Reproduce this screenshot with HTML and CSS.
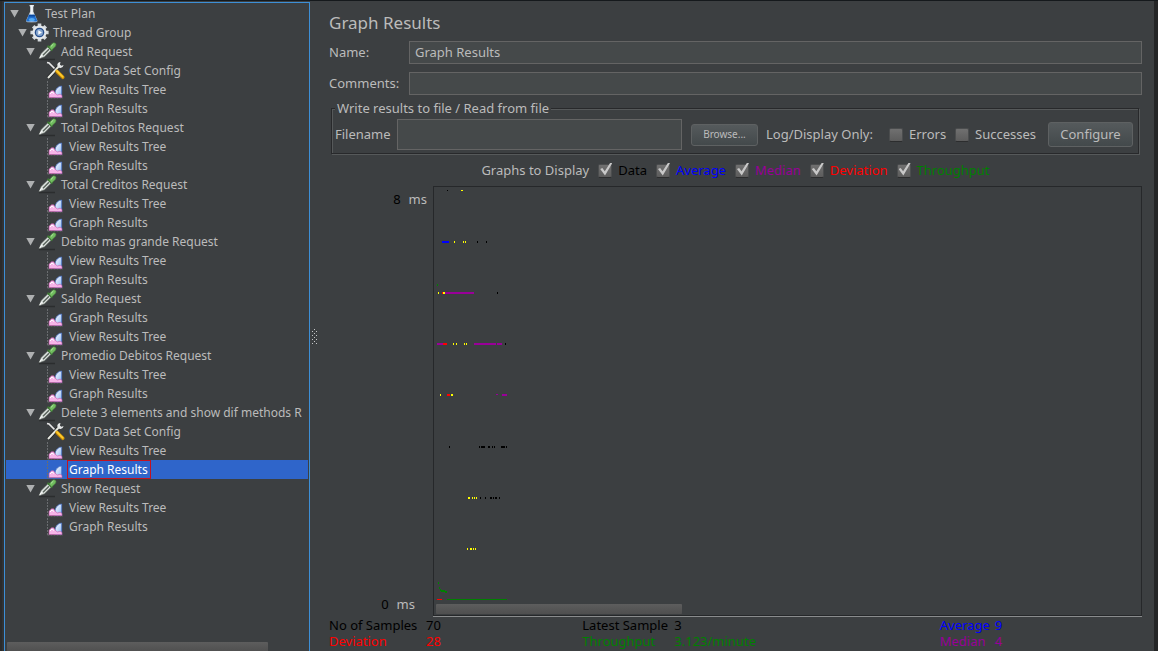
FILE: index.html
```html
<!DOCTYPE html>
<html lang="en">
<head>
<meta charset="utf-8">
<title>Graph Results</title>
<link rel="stylesheet" href="styles.css">
</head>
<body>
<svg class="defs" aria-hidden="true">
  <defs>
    <linearGradient id="glass" x1="0" x2="1"><stop offset="0" stop-color="#8fa3b3"/><stop offset=".5" stop-color="#f4f8fb"/><stop offset="1" stop-color="#8fa3b3"/></linearGradient>
    <linearGradient id="wave" x1="0" y1="0" x2="1" y2="1"><stop offset="0" stop-color="#fff"/><stop offset="1" stop-color="#86b4f4"/></linearGradient>
    <symbol id="flask" viewBox="0 0 20 19">
      <path d="M7.500 1h4.500v1l-.7.800V7.500l4.200 9q.4 1.700-1.500 1.700H5.500q-1.900 0-1.500-1.700l4.200-9V2.800L7.500 2z" fill="url(#glass)"/>
      <path d="M7 10.800h5.600l2.400 5.400q.3 1.400-1.300 1.400H5.800q-1.600 0-1.300-1.400z" fill="#1f6fd0"/>
      <path d="M7 10.800h5.600l.7 1.600h-7z" fill="#0b489c"/><ellipse cx="9.800" cy="15.500" rx="3" ry="1.600" fill="#54aaf2"/>
    </symbol>
    <symbol id="gear" viewBox="0 0 20 19">
      <g stroke="#d5dade" stroke-width="3.600"><path d="M9.500 .4v18.200M.4 9.500h18.200M3.200 3.200l12.600 12.600M15.800 3.200L3.200 15.800"/></g>
      <circle cx="9.500" cy="9.500" r="7" fill="#e5e8ea"/><circle cx="9.500" cy="9.500" r="4.800" fill="#274f8e"/><circle cx="9.500" cy="9.500" r="3.500" fill="#86a6cf"/>
      <path d="M8.300 7.300l3.600 2.200-3.600 2.200z" fill="#fff"/>
    </symbol>
    <symbol id="pipette" viewBox="0 0 20 19">
      <path d="M1 17.500h16" stroke="#2b2d2e" stroke-width="1.500"/>
      <path d="M1 16.800l2.200-5.300 7.300-7.200 3.300 3.300-7.300 7.100z" fill="#dde2df" stroke="#6d746f" stroke-width=".6"/>
      <path d="M5 13.200l6-6" stroke="#59625c" stroke-width="1.400"/><path d="M1.800 15.900l2-3.300" stroke="#fff" stroke-width="1"/>
      <path d="M9.500 3.800l4.800 4.800" stroke="#3d7235" stroke-width="2"/>
      <path d="M11 5l3.300-3.600q1.700-1.400 3.100-.1 1.400 1.500-.1 3.200L13.600 8z" fill="#72bd60" stroke="#4a8a3e" stroke-width=".6"/><path d="M13 4.400l2.400-2.300" stroke="#b9e7a9"/>
    </symbol>
    <symbol id="tools" viewBox="0 0 20 19">
      <path d="M1 1.500l2 .5 8 8" stroke="#e8e8e8" stroke-width="1.700" fill="none"/>
      <path d="M2 17L12.500 5.800" stroke="#202224" stroke-width="3.600"/><path d="M2 17L12.500 5.800" stroke="#e5e7df" stroke-width="2"/>
      <path d="M11 10.500l5.800 5.800" stroke="#c88b00" stroke-width="3.600" stroke-linecap="round"/><path d="M11 10l5.800 5.800" stroke="#ffcb2e" stroke-width="1.800" stroke-linecap="round"/>
      <path d="M14.500 .9q-3.200.4-3.200 3.200.3 2.900 3.300 2.800 2.600-.2 3-2.900l-2.300.7-1.400-1.300z" fill="#e6e8e8"/>
    </symbol>
    <symbol id="chart" viewBox="0 0 20 19">
      <path d="M1.500 1v17M1.500 18H17" stroke="#6a6d70" stroke-dasharray="2 1" fill="none"/>
      <path d="M9.500 17.500q-1.500-6 1.500-9.300 2.300-2.400 4.700-2.200v11.500z" fill="url(#wave)" stroke="#3f68c0" stroke-width=".7"/>
      <path d="M3 17.500v-4.300l2.600-2.400h2l1.900 2.800 2 1.400 2.700-.8 1.800 1.300v2z" fill="#f6b4e8" stroke="#c35ca8" stroke-width=".6"/>
      <path d="M4 14l2-2 2 1.500" stroke="#fff" fill="none"/>
    </symbol>
  </defs>
</svg>
<div class="window">
  <div class="edge edge-left"></div>
  <nav class="tree-panel" aria-label="Test plan tree">
    <ul class="tree">
      <li class="row d0"><span class="arrow"></span><svg class="icon"><use href="#flask"/></svg><span class="label">Test Plan</span></li>
      <li class="row d1"><span class="arrow"></span><svg class="icon"><use href="#gear"/></svg><span class="label">Thread Group</span></li>
      <li class="row d2"><span class="arrow"></span><svg class="icon"><use href="#pipette"/></svg><span class="label">Add Request</span></li>
      <li class="row d3"><svg class="icon"><use href="#tools"/></svg><span class="label">CSV Data Set Config</span></li>
      <li class="row d3"><svg class="icon"><use href="#chart"/></svg><span class="label">View Results Tree</span></li>
      <li class="row d3"><svg class="icon"><use href="#chart"/></svg><span class="label">Graph Results</span></li>
      <li class="row d2"><span class="arrow"></span><svg class="icon"><use href="#pipette"/></svg><span class="label">Total Debitos Request</span></li>
      <li class="row d3"><svg class="icon"><use href="#chart"/></svg><span class="label">View Results Tree</span></li>
      <li class="row d3"><svg class="icon"><use href="#chart"/></svg><span class="label">Graph Results</span></li>
      <li class="row d2"><span class="arrow"></span><svg class="icon"><use href="#pipette"/></svg><span class="label">Total Creditos Request</span></li>
      <li class="row d3"><svg class="icon"><use href="#chart"/></svg><span class="label">View Results Tree</span></li>
      <li class="row d3"><svg class="icon"><use href="#chart"/></svg><span class="label">Graph Results</span></li>
      <li class="row d2"><span class="arrow"></span><svg class="icon"><use href="#pipette"/></svg><span class="label">Debito mas grande Request</span></li>
      <li class="row d3"><svg class="icon"><use href="#chart"/></svg><span class="label">View Results Tree</span></li>
      <li class="row d3"><svg class="icon"><use href="#chart"/></svg><span class="label">Graph Results</span></li>
      <li class="row d2"><span class="arrow"></span><svg class="icon"><use href="#pipette"/></svg><span class="label">Saldo Request</span></li>
      <li class="row d3"><svg class="icon"><use href="#chart"/></svg><span class="label">Graph Results</span></li>
      <li class="row d3"><svg class="icon"><use href="#chart"/></svg><span class="label">View Results Tree</span></li>
      <li class="row d2"><span class="arrow"></span><svg class="icon"><use href="#pipette"/></svg><span class="label">Promedio Debitos Request</span></li>
      <li class="row d3"><svg class="icon"><use href="#chart"/></svg><span class="label">View Results Tree</span></li>
      <li class="row d3"><svg class="icon"><use href="#chart"/></svg><span class="label">Graph Results</span></li>
      <li class="row d2"><span class="arrow"></span><svg class="icon"><use href="#pipette"/></svg><span class="label">Delete 3 elements and show dif methods R</span></li>
      <li class="row d3"><svg class="icon"><use href="#tools"/></svg><span class="label">CSV Data Set Config</span></li>
      <li class="row d3"><svg class="icon"><use href="#chart"/></svg><span class="label">View Results Tree</span></li>
      <li class="row d3 selected"><svg class="icon"><use href="#chart"/></svg><span class="label">Graph Results</span></li>
      <li class="row d2"><span class="arrow"></span><svg class="icon"><use href="#pipette"/></svg><span class="label">Show Request</span></li>
      <li class="row d3"><svg class="icon"><use href="#chart"/></svg><span class="label">View Results Tree</span></li>
      <li class="row d3"><svg class="icon"><use href="#chart"/></svg><span class="label">Graph Results</span></li>
    </ul>
    <div class="scroll-thumb tree-thumb"></div>
  </nav>
  <div class="splitter">
    <svg class="grip" viewBox="0 0 6 16" shape-rendering="crispEdges"><path d="M3 .5h1M1 2.500h1M5 2.500h1M3 4.500h1M1 6.500h1M5 6.500h1M3 8.500h1M1 10.500h1M5 10.500h1M3 12.500h1M1 14.500h1M5 14.500h1" stroke="#c4c6c7"/></svg>
  </div>
  <main class="main">
    <h1 class="title">Graph Results</h1>
    <div class="field"><label for="name">Name:</label><input class="text" id="name" type="text" value="Graph Results"></div>
    <div class="field"><label for="comments">Comments:</label><input class="text" id="comments" type="text"></div>
    <fieldset class="file-box">
      <legend>Write results to file / Read from file</legend>
      <div class="file-row">
        <label for="file">Filename</label>
        <input class="text file-input" id="file" type="text">
        <button class="btn browse" type="button">Browse...</button>
        <span class="log-label">Log/Display Only:</span>
        <label class="check errors"><input type="checkbox">Errors</label>
        <label class="check successes"><input type="checkbox">Successes</label>
        <button class="btn configure" type="button">Configure</button>
      </div>
    </fieldset>
    <div class="series">
      <span>Graphs to Display</span>
      <label class="check c-data"><input type="checkbox" checked>Data</label>
      <label class="check c-average"><input type="checkbox" checked>Average</label>
      <label class="check c-median"><input type="checkbox" checked>Median</label>
      <label class="check c-deviation"><input type="checkbox" checked>Deviation</label>
      <label class="check c-throughput"><input type="checkbox" checked>Throughput</label>
    </div>
    <section class="graph">
      <div class="axis">
        <div class="tick"><span class="c-data">8</span><span>ms</span></div>
        <div class="tick low"><span class="c-data">0</span><span>ms</span></div>
      </div>
      <div class="plot">
        <svg class="points" viewBox="434 187 80 416" fill="none" stroke-width="2" shape-rendering="crispEdges">
          <g stroke="#000"><path stroke-width="1" d="M447 190.500h1"/><path d="M477 242h1M486 242h1M497 293h1M505 344h1M449 447h1M479 447h1M481 447h4M488 447h2M492 447h1M494 447h1M501 447h4M506 447h1M480 498h1M485 498h1M490 498h2M493 498h1M495 498h2M499 498h1"/></g>
          <g stroke="#ff0"><path stroke-width="1" d="M461 190.500h2"/><path d="M454 242h1M463 242h1M465 242h1M438 293h1M443 293h2M453 344h1M456 344h1M464 344h1M466 344h1M440 395h1M451 395h2M468 498h2M472 498h1M474 498h1M476 498h1M467 549h1M470 549h2M473 549h1M475 549h1"/></g>
          <path stroke="#00f" d="M442 242h7"/>
          <g stroke="#909"><path d="M445 293h29M437 344h6M474 344h22M497 344h5M502 395h5"/><path stroke-width="1" d="M496 394.500h2"/></g>
          <g stroke="red"><path d="M442 293h1M443 344h4M447 395h3"/><path stroke-width="1" d="M437 599.500h5"/></g>
          <g stroke="#008000"><path d="M437 285h1M438 583h1M439 588h1M440 590h1M441 591h4M445 592h2"/><path stroke-width="1" d="M447 599.500h60"/></g>
        </svg>
        <div class="scroll-thumb plot-thumb"></div>
      </div>
    </section>
    <dl class="stats">
      <div class="c-data"><dt>No of Samples</dt><dd>70</dd></div>
      <div class="c-data"><dt>Latest Sample</dt><dd>3</dd></div>
      <div class="c-average short"><dt>Average</dt><dd>9</dd></div>
      <div class="c-deviation"><dt>Deviation</dt><dd>28</dd></div>
      <div class="c-throughput"><dt>Throughput</dt><dd>3.123/minute</dd></div>
      <div class="c-median short"><dt>Median</dt><dd>4</dd></div>
    </dl>
  </main>
  <div class="edge edge-right"></div>
</div>
</body>
</html>
```
FILE: styles.css
```css
* { box-sizing: border-box; }

body {
  margin: 0;
  background: #3c3f41;
  color: #bbb;
  font: 13px/19px "Noto Sans", "Open Sans", sans-serif;
  overflow: hidden;
}

.defs { position: absolute; width: 0; height: 0; }

.window {
  display: grid;
  grid-template-columns: 4px 306px 8px minmax(0, 1fr) 4px;
  height: 100vh;
  border-top: 1px solid #15191c;
}

.edge-left { background: #2b2b2b; border-right: 2px solid #313335; }
.edge-right { background: #242526; }

.tree-panel {
  display: flex;
  flex-direction: column;
  justify-content: space-between;
  margin-top: 1px;
  padding: 1px 1px 0;
  border: 1px solid #3d8fd6;
  border-bottom: 0;
  overflow: hidden;
}

.tree { margin: 0; padding: 0; list-style: none; font-size: 12px; }

.row {
  display: flex;
  align-items: center;
  height: 19px;
  white-space: nowrap;
}
.d0 { padding-left: 4px; }
.d1 { padding-left: 12px; }
.d2 { padding-left: 20px; }
.d3 { padding-left: 40px; }

.arrow {
  flex: none;
  width: 9px;
  height: 8px;
  margin-right: 3px;
  background: #aeb0b1;
  clip-path: polygon(0 0, 100% 0, 50% 100%);
}
.icon { flex: none; width: 20px; height: 19px; }
.label { margin-left: 1px; padding: 0 2px 0 1px; line-height: 17px; border: 1px solid transparent; }
.selected { background: #2f65ca; color: #fff; }
.selected .label { border-color: #c4121f; }

.scroll-thumb {
  height: 10px;
  border-radius: 1px;
  background: linear-gradient(#5d5d5d, #4f4f4f);
}
.tree-thumb { flex: none; width: 261px; margin-left: 1px; }

.splitter { display: flex; align-items: center; padding: 20px 0 0 1px; }
.grip { width: 6px; height: 16px; }

.main {
  display: flex;
  flex-direction: column;
  padding: 10px 12px 0 11px;
  height: 100vh;
}

.title { margin: 0 0 6px; font-size: 17px; line-height: 24px; font-weight: 400; }

.field { display: flex; align-items: center; margin-bottom: 8px; }
.field label { width: 80px; }
.field .text { flex: 1; height: 23px; }

.text {
  min-width: 0;
  padding: 0 5px 1px;
  border: 1px solid #646464;
  background: #45494a;
  color: #bbb;
  font: inherit;
}

.file-box {
  min-width: 0;
  margin: -3px 3px 1px 2px;
  padding: 2px 5px 3px 3px;
  border: 1px solid #28292b;
  box-shadow: 1px 1px #56595a, inset 1px 1px #56595a;
}
.file-box legend { padding: 0 2px; line-height: 17px; background: #3c3f41; }
.file-row { display: flex; align-items: center; }
.file-input { flex: 1; height: 31px; margin-left: 6px; }

.btn {
  border: 1px solid #5e6162;
  border-radius: 3px;
  background: linear-gradient(#555a5c, #43494b);
  color: #bbb;
  font: inherit;
  padding: 0;
}
.browse { width: 67px; height: 22px; margin-left: 9px; font-size: 10px; }
.configure { width: 85px; height: 25px; margin-left: 8px; }
.log-label { width: 115px; margin-left: 8px; }
.errors { width: 57px; margin-left: 8px; }
.successes { width: 85px; margin-left: 9px; }

.check { display: inline-flex; align-items: center; gap: 6px; white-space: nowrap; }
.check input {
  position: relative;
  flex: none;
  appearance: none;
  width: 14px;
  height: 14px;
  margin: 0;
  border: 1px solid #4b4d4e;
  border-bottom-color: #2c2d2e;
  border-radius: 2px;
  background: linear-gradient(#707070, #5c5c5c);
}
.check input:checked::after {
  content: "";
  position: absolute;
  inset: -2px -1px 1px 1px;
  background: #c8c8c8;
  clip-path: polygon(0 50%, 18% 42%, 38% 68%, 85% 0, 100% 5%, 40% 100%);
}

.series {
  display: flex;
  justify-content: center;
  gap: 9px;
  height: 31px;
  align-items: center;
}

.c-data { color: #000; }
.c-average { color: #00f; }
.c-median { color: #909; }
.c-deviation { color: #f00; }
.c-throughput { color: #008000; }

.graph { display: flex; flex: 1; min-height: 0; }
.axis {
  display: flex;
  flex-direction: column;
  justify-content: space-between;
  width: 104px;
  padding: 4px 6px 2px 0;
}
.tick { display: flex; justify-content: flex-end; gap: 8px; }
.low { padding-right: 12px; }
.plot {
  display: flex;
  flex: 1;
  flex-direction: column;
  justify-content: space-between;
  padding-bottom: 1px;
  border: 1px solid #26282a;
  box-shadow: 0 1px #8a8c8d;
}
.points { flex: none; width: 80px; height: 416px; }
.plot-thumb { width: 246px; margin-left: 2px; flex: none; }

.stats {
  display: grid;
  grid-template-columns: 253fr 357fr 202fr;
  align-content: start;
  margin: 1px 0 0;
  line-height: 16px;
  height: 35px;
}
.stats div { display: flex; }
.stats dt { min-width: 92px; }
.stats .short dt { min-width: 55px; }
.stats dd { margin: 0; }
.stats div:nth-child(3n + 1) dt { min-width: 97px; }
```
